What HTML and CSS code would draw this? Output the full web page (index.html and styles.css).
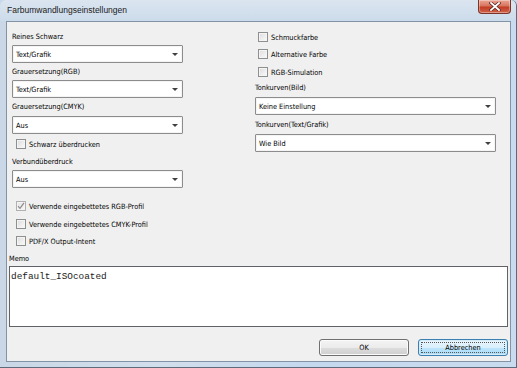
FILE: index.html
```html
<!doctype html>
<html lang="de">
  <head>
    <meta charset="UTF-8" />
    <title>Farbumwandlungseinstellungen</title>
    <link rel="stylesheet" href="styles.css">
  </head>
  <body>
    <div class="window">
      <div class="titlebar">
        <span class="title">Farbumwandlungseinstellungen</span>
        <div class="close-btn">
          <svg width="12" height="9" viewBox="0 0 12 9">
            <path d="M2 1 L10 8 M10 1 L2 8" stroke="#5a2a22" stroke-width="3.2" stroke-linecap="square" />
            <path d="M2 1 L10 8 M10 1 L2 8" stroke="#ffffff" stroke-width="1.8" stroke-linecap="square" />
          </svg>
        </div>
      </div>

      <div class="client">
        <div class="columns">
          <div class="col-left">
            <div class="label">Reines Schwarz</div>
            <div class="combo mt2"><span>Text/Grafik</span><i class="arrow"></i></div>

            <div class="label mt3">Grauersetzung(RGB)</div>
            <div class="combo mt2"><span>Text/Grafik</span><i class="arrow"></i></div>

            <div class="label mt3">Grauersetzung(CMYK)</div>
            <div class="combo mt3"><span>Aus</span><i class="arrow"></i></div>

            <div class="check-row indent mt4"><span class="box"></span>Schwarz überdrucken</div>

            <div class="label mt6">Verbundüberdruck</div>
            <div class="combo mt2"><span>Aus</span><i class="arrow"></i></div>
          </div>

          <div class="col-right">
            <div class="check-row"><span class="box"></span>Schmuckfarbe</div>
            <div class="check-row mt5"><span class="box"></span>Alternative Farbe</div>
            <div class="check-row mt6"><span class="box"></span>RGB-Simulation</div>

            <div class="label mt4">Tonkurven(Bild)</div>
            <div class="combo mt3"><span>Keine Einstellung</span><i class="arrow"></i></div>

            <div class="label mt4">Tonkurven(Text/Grafik)</div>
            <div class="combo mt3"><span>Wie Bild</span><i class="arrow"></i></div>
          </div>
        </div>

        <div class="profiles">
          <div class="check-row">
            <span class="box checked">
              <svg width="8" height="8" viewBox="0 0 8 8"><path d="M1 4.2 L3 6.4 L7 0.8" fill="none" stroke="#8a8a8a" stroke-width="1.2" /></svg>
            </span>Verwende eingebettetes RGB-Profil
          </div>
          <div class="check-row mt6"><span class="box"></span>Verwende eingebettetes CMYK-Profil</div>
          <div class="check-row mt5"><span class="box"></span>PDF/X Output-Intent</div>
        </div>

        <div class="label memo-label">Memo</div>
        <div class="memo">default_ISOcoated</div>

        <div class="buttons">
          <div class="btn">OK</div>
          <div class="btn btn-default"><span class="focus">Abbrechen</span></div>
        </div>
      </div>
    </div>
  </body>
</html>
```

FILE: styles.css
```css
* {
  box-sizing: border-box;
  margin: 0;
  padding: 0;
}

body {
  background-color: #c6d8ec;
  font-family: "DejaVu Sans Condensed", "DejaVu Sans", sans-serif;
  font-stretch: condensed;
  font-size: 7.3px;
  color: #000;
}

.window {
  width: 517px;
  height: 368px;
  display: flex;
  flex-direction: column;
  background: linear-gradient(to right, #c9d7e6 0%, #d2deeb 30%, #c4d8ee 60%, #c9dbee 100%);
  border-right: 1px solid #5d6b7a;
  border-bottom: 1px solid #5d6b7a;
  border-radius: 6px 6px 0 0;
}

/* Title bar */
.titlebar {
  height: 21px;
  display: flex;
  justify-content: space-between;
  align-items: flex-start;
  background: linear-gradient(to bottom, #dbe5f0, #ccdbeb);
  border-radius: 6px 6px 0 0;
}

.title {
  padding: 5px 0 0 7px;
  font-family: "Liberation Sans", Arial, sans-serif;
  font-stretch: normal;
  font-size: 8.5px;
  line-height: 11px;
  color: #1b1b1b;
}

.close-btn {
  width: 33px;
  height: 14px;
  margin-right: 5px;
  display: flex;
  justify-content: center;
  align-items: center;
  background: linear-gradient(to bottom, #eaa594 0%, #d9745f 45%, #c23d25 55%, #d0634a 100%);
  border: 1px solid #7a3428;
  border-top: none;
  border-radius: 0 0 4px 4px;
  box-shadow: inset 0 0 0 1px rgba(255, 255, 255, 0.35);
}

/* Client area */
.client {
  flex: 1;
  margin: 0 5px 5px 6px;
  background-color: #f0f0f0;
  border: 1px solid #8393a6;
  padding: 9px 2px 0 2px;
}

.columns {
  display: flex;
}

.col-left {
  width: 171px;
  margin-left: 3px;
}

.col-right {
  width: 241px;
  margin-left: 72px;
}

.label {
  height: 12px;
  line-height: 12px;
  white-space: nowrap;
}

.combo {
  height: 18px;
  display: flex;
  align-items: center;
  justify-content: space-between;
  padding: 0 4px 0 3px;
  background-color: #fff;
  border: 1px solid #8c8c8c;
  border-radius: 1px;
  box-shadow: inset 0 0 0 1px #f4f4f4;
}

.arrow {
  width: 0;
  height: 0;
  border-left: 3px solid transparent;
  border-right: 3px solid transparent;
  border-top: 3px solid #404040;
}

.check-row {
  height: 12px;
  display: flex;
  align-items: center;
  gap: 3px;
  white-space: nowrap;
  padding-left: 3px;
}

.check-row.indent {
  padding-left: 4px;
}

.box {
  width: 10px;
  height: 10px;
  flex-shrink: 0;
  display: flex;
  align-items: center;
  justify-content: center;
  border: 1px solid #8e8f8f;
  background: linear-gradient(135deg, #dcdcdc, #fbfbfb);
  box-shadow: inset 0 0 0 1px #f4f4f4;
}

.box.checked {
  background: linear-gradient(135deg, #e4e4e4, #f7f7f7);
  border-color: #b0b0b0;
}

.profiles {
  margin-top: 12px;
  padding-left: 4px;
}

.memo-label {
  margin-top: 6px;
}

.memo {
  margin-top: 1px;
  height: 61px;
  background-color: #fff;
  border: 1px solid #5f6368;
  padding: 4px 1px;
  font-family: "Liberation Mono", "Courier New", monospace;
  font-stretch: normal;
  font-size: 9.4px;
  line-height: 12px;
  color: #222;
}

.buttons {
  margin-top: 12px;
  display: flex;
  justify-content: flex-end;
  gap: 9px;
}

.btn {
  width: 90px;
  height: 17px;
  display: flex;
  align-items: center;
  justify-content: center;
  border: 1px solid #707070;
  border-radius: 3px;
  background: linear-gradient(to bottom, #f4f4f4 0%, #ebebeb 50%, #dddddd 51%, #cfcfcf 100%);
  box-shadow: inset 0 0 0 1px #fbfbfb;
}

.btn-default {
  border-color: #3c7fb1;
  background: linear-gradient(to bottom, #eaf6fd 0%, #d9f0fc 50%, #bee6fd 51%, #a7d9f5 100%);
  box-shadow: inset 0 0 0 1px #d6ecf8;
  padding: 2px;
}

.focus {
  width: 100%;
  height: 100%;
  display: flex;
  align-items: center;
  justify-content: center;
  border: 1px dotted #555;
}

.mt2 { margin-top: 2px; }
.mt3 { margin-top: 3px; }
.mt4 { margin-top: 4px; }
.mt5 { margin-top: 5px; }
.mt6 { margin-top: 6px; }
```
